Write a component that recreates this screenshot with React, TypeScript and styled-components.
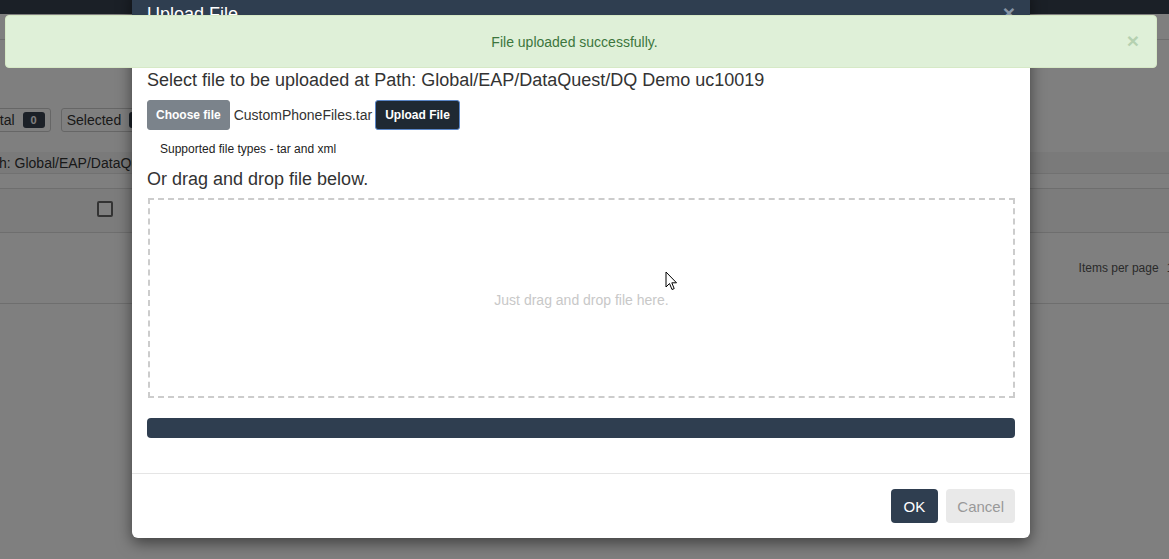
import React from "react";
import styled, { createGlobalStyle } from "styled-components";

const Global = createGlobalStyle`
  html, body { margin: 0; padding: 0; }
  body {
    width: 1169px; height: 559px; overflow: hidden;
    font-family: "Liberation Sans", Arial, sans-serif;
    color: #333; background: #fff;
  }
  * { box-sizing: border-box; }
`;

const Page = styled.div`
  position: relative;
  width: 1169px;
  height: 559px;
  overflow: hidden;
`;

/* ---------- background page ---------- */
const Navbar = styled.div`
  height: 14px;
  background: #36404f;
`;
const SubHeader = styled.div`
  height: 26px;
  border-bottom: 1px solid #ddd;
  background: #fff;
`;
const Toolbar = styled.div`
  display: flex;
  gap: 10px;
  margin: 68px 0 0 -21px;
  height: 24px;
`;
const CountBox = styled.div`
  display: flex;
  align-items: center;
  gap: 8px;
  padding: 0 5px;
  border: 1px solid #ccc;
  border-radius: 3px;
  font-size: 14px;
  color: #333;
`;
const Badge = styled.span`
  background: #36404f;
  color: #fff;
  font-size: 11px;
  font-weight: bold;
  border-radius: 3px;
  padding: 2px 8px;
`;
const PathBar = styled.div`
  margin-top: 20px;
  height: 22px;
  background: #f5f5f5;
  border-bottom: 1px solid #e3e3e3;
  font-size: 14px;
  line-height: 22px;
  margin-left: -22px;
  white-space: nowrap;
`;
const TableHead = styled.div`
  margin-top: 14px;
  height: 45px;
  border-top: 1px solid #ddd;
  border-bottom: 1px solid #ddd;
  background: #f8f8f8;
  display: flex;
  align-items: center;
  padding: 0 0 4px 97px;
`;
const Check = styled.span`
  width: 16px;
  height: 16px;
  border: 2px solid #666;
  border-radius: 2px;
  background: #fff;
`;
const PagerRow = styled.div`
  height: 71px;
  border-bottom: 1px solid #ddd;
  display: flex;
  align-items: center;
  justify-content: flex-end;
  margin-right: -11px;
  gap: 8px;
  font-size: 12px;
  color: #555;
`;

const Overlay = styled.div`
  position: absolute;
  inset: 0;
  background: rgba(0, 0, 0, 0.5);
`;

/* ---------- modal ---------- */
const Modal = styled.div`
  position: absolute;
  left: 132px;
  top: -12px;
  width: 898px;
  height: 550px;
  background: #fff;
  border-radius: 6px;
  box-shadow: 0 5px 15px rgba(0, 0, 0, 0.5);
  display: flex;
  flex-direction: column;
  overflow: hidden;
`;
const ModalHeader = styled.div`
  height: 62px;
  background: #2f3e50;
  color: #fff;
  display: flex;
  align-items: flex-start;
  justify-content: space-between;
  padding: 16px 15px 0;
`;
const Title = styled.h4`
  margin: 0;
  font-size: 18px;
  font-weight: normal;
`;
const HeaderClose = styled.span`
  font-size: 21px;
  font-weight: bold;
  color: #8795a5;
  line-height: 18px;
`;
const ModalBody = styled.div`
  padding: 19px 15px 0;
  flex: 1;
  display: flex;
  flex-direction: column;
`;
const Heading = styled.div`
  font-size: 18px;
  line-height: 22px;
  color: #333;
`;
const FileRow = styled.div`
  display: flex;
  align-items: center;
  margin-top: 9px;
  height: 30px;
`;
const Btn = styled.button<{ $variant: "grey" | "dark" }>`
  height: 30px;
  padding: 0 ${(p) => (p.$variant === "grey" ? "8px" : "9px")};
  border-radius: 3px;
  font-family: inherit;
  font-size: 12px;
  font-weight: bold;
  color: #fff;
  background: ${(p) => (p.$variant === "grey" ? "#7b838b" : "#1f2933")};
  border: 1px solid ${(p) => (p.$variant === "grey" ? "#7b838b" : "#5a86c8")};
`;
const FileName = styled.span`
  font-size: 14px;
  margin: 0 3px 0 4px;
  color: #333;
`;
const Hint = styled.div`
  font-size: 12px;
  margin: 12px 0 0 13px;
  color: #222;
`;
const SubHeading = styled(Heading)`
  margin-top: 12px;
`;
const DropZone = styled.div`
  margin-top: 8px;
  margin-left: 1px;
  height: 200px;
  border: 2px dashed #ccc;
  display: flex;
  align-items: center;
  justify-content: center;
  padding-top: 3px;
  font-size: 14px;
  color: #c8c8c8;
  position: relative;
`;
const Cursor = styled.svg`
  position: absolute;
  left: 515px;
  top: 71px;
`;
const Progress = styled.div`
  margin-top: 20px;
  height: 20px;
  border-radius: 4px;
  background: #2f3e50;
`;
const ModalFooter = styled.div`
  margin-top: 28px;
  border-top: 1px solid #e5e5e5;
  height: 65px;
  display: flex;
  align-items: center;
  justify-content: flex-end;
  gap: 8px;
  padding: 0 15px;
`;
const FooterBtn = styled.button<{ $primary?: boolean }>`
  height: 34px;
  padding: 0 ${(p) => (p.$primary ? "13px" : "11px")};
  border-radius: 4px;
  border: none;
  font-family: inherit;
  font-size: 15px;
  background: ${(p) => (p.$primary ? "#2f3e50" : "#e9e9e9")};
  color: ${(p) => (p.$primary ? "#fff" : "#999")};
`;

/* ---------- alert ---------- */
const Alert = styled.div`
  position: absolute;
  left: 5px;
  top: 15px;
  width: 1152px;
  height: 53px;
  background: #dff0d8;
  border: 1px solid #d6e9c6;
  border-radius: 4px;
  display: flex;
  align-items: center;
  justify-content: center;
  padding-right: 13px;
  font-size: 14px;
  color: #3c763d;
`;
const AlertClose = styled.span`
  position: absolute;
  right: 17px;
  top: 14px;
  font-size: 21px;
  font-weight: bold;
  line-height: 21px;
  color: #3c763d;
  opacity: 0.25;
`;

export default function App() {
  return (
    <Page>
      <Global />
      <Navbar />
      <SubHeader />
      <Toolbar>
        <CountBox>
          Total <Badge>0</Badge>
        </CountBox>
        <CountBox>
          Selected <Badge>0</Badge>
        </CountBox>
      </Toolbar>
      <PathBar>Path: Global/EAP/DataQuest/DQ Demo uc10019</PathBar>
      <TableHead>
        <Check />
      </TableHead>
      <PagerRow>
        <span>Items per page</span>
        <span>10</span>
      </PagerRow>
      <Overlay />

      <Modal>
        <ModalHeader>
          <Title>Upload File</Title>
          <HeaderClose>×</HeaderClose>
        </ModalHeader>
        <ModalBody>
          <Heading>
            Select file to be uploaded at Path: Global/EAP/DataQuest/DQ Demo uc10019
          </Heading>
          <FileRow>
            <Btn $variant="grey">Choose file</Btn>
            <FileName>CustomPhoneFiles.tar</FileName>
            <Btn $variant="dark">Upload File</Btn>
          </FileRow>
          <Hint>Supported file types - tar and xml</Hint>
          <SubHeading>Or drag and drop file below.</SubHeading>
          <DropZone>
            Just drag and drop file here.
            <Cursor width="13" height="20" viewBox="0 0 13 20">
              <path
                d="M1 1 L1 16 L4.5 12.5 L7 18.5 L9.2 17.6 L6.8 11.8 L11.5 11.8 Z"
                fill="#fff"
                stroke="#000"
                strokeWidth="1"
                strokeLinejoin="miter"
              />
            </Cursor>
          </DropZone>
          <Progress />
        </ModalBody>
        <ModalFooter>
          <FooterBtn $primary>OK</FooterBtn>
          <FooterBtn>Cancel</FooterBtn>
        </ModalFooter>
      </Modal>

      <Alert>
        File uploaded successfully.
        <AlertClose>×</AlertClose>
      </Alert>
    </Page>
  );
}
